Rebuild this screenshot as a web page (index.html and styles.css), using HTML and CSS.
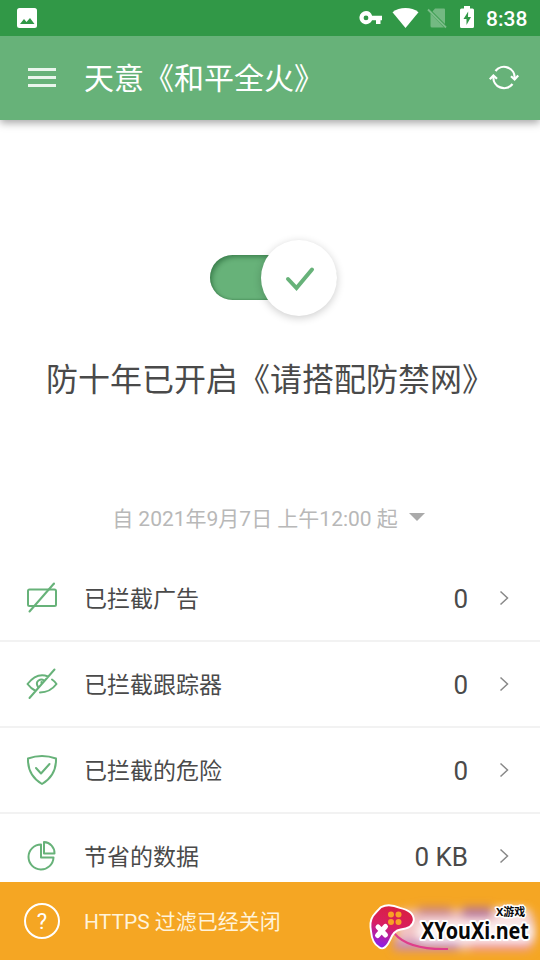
FILE: index.html
```html
<!DOCTYPE html>
<html lang="zh-CN">
<head>
<meta charset="utf-8">
<title>天意《和平全火》</title>
<link rel="stylesheet" href="styles.css">
</head>
<body>
<div class="screen">
  <div class="status-bar">
    <svg class="photo" width="20" height="20" viewBox="0 0 20 20"><rect width="20" height="20" rx="2.5" fill="#fff"/><path d="M3 16l4-5 2.500 3L13 10l4.500 6z" fill="#319847"/></svg>
    <div class="status-icons">
      <svg class="key" width="24" height="14" viewBox="0 0 24 14"><path fill="#fff" fill-rule="evenodd" d="M7 0a6.600 6.600 0 1 0 6.100 9.200H17V13h4.500V9.200H23V4.800H13.100A6.600 6.600 0 0 0 7 0zM7 4.500a2.400 2.400 0 1 1 0 4.800 2.400 2.400 0 0 1 0-4.800z"/></svg>
      <svg class="wifi" width="27" height="22" viewBox="0 0 27 22"><path fill="#fff" d="M0.500 5.200Q6 1 13.500 1T26.500 5.200L13.500 21z"/></svg>
      <svg class="sim" width="20" height="22" viewBox="0 0 20 22"><path fill="#fff" opacity=".32" d="M8 1.500h9q1 0 1 1V17L5.500 4.500zM3.500 6.500L17 20.500H5q-1.500 0-1.500-1.500z"/><path d="M1 2.500l18 18" stroke="#fff" stroke-width="1.800" opacity=".36"/></svg>
      <svg class="battery" width="14" height="22" viewBox="0 0 14 22"><path fill="#fff" d="M4 0h6v2.500h2.500Q14 2.500 14 4v16.500q0 1.500-1.500 1.500h-11Q0 22 0 20.500V4q0-1.500 1.500-1.500H4z"/><path fill="#319847" d="M8.200 5.500L3.500 13h3v6L11 11H8z"/></svg>
      <span class="clock">8:38</span>
    </div>
  </div>
  <header class="app-bar">
    <div class="menu"><i></i><i></i><i></i></div>
    <h1>天意《和平全火》</h1>
    <svg class="refresh" width="30" height="26" viewBox="0 0 30 26" fill="none" stroke="#fff" stroke-width="2.200"><path d="M6.500 6A10.700 10.700 0 0 1 25.600 13.500M23.500 19A10.700 10.700 0 0 1 4.400 11.500"/><path d="M22 11.200l3.600 3.300 3.600-3.900M.8 14.300l3.600-3.800L8 13.700"/></svg>
  </header>
  <main class="content">
    <div class="toggle">
      <div class="knob"><svg width="32" height="28" viewBox="0 0 32 28"><path d="M4 14l8.500 9L28 4.500" fill="none" stroke="#67b279" stroke-width="4" stroke-linecap="round"/></svg></div>
    </div>
    <h2>防十年已开启《请搭配防禁网》</h2>
    <div class="period"><span>自 2021年9月7日 上午12:00 起</span><svg width="16" height="8" viewBox="0 0 16 8"><path d="M0 0h16L8 8z" fill="#aaa"/></svg></div>
    <div class="stats">
      <div class="row">
        <svg class="icon" viewBox="0 0 32 32"><rect x="2" y="7.500" width="28" height="16.500" rx="1.500"/><path d="M3.500 29.500L28 1.500"/></svg>
        <span class="label">已拦截广告</span><span class="value">0</span>
        <svg class="chevron" viewBox="0 0 10 16"><path d="M1.500 1.500L8.500 8l-7 6.500"/></svg>
      </div>
      <div class="row">
        <svg class="icon" viewBox="0 0 32 32"><path d="M22 8.500Q11 4 1.500 16 5 20.500 9 22.500M26 11.500q2.500 1.700 4.500 4.500-6.500 8.500-16.500 8.500M12 19Q9.500 14.500 12.500 12.500 15.500 10.500 18 12.500M15.500 15.500v-1.500M3.500 30L28.500 1.500"/></svg>
        <span class="label">已拦截跟踪器</span><span class="value">0</span>
        <svg class="chevron" viewBox="0 0 10 16"><path d="M1.500 1.500L8.500 8l-7 6.500"/></svg>
      </div>
      <div class="row">
        <svg class="icon" viewBox="0 0 32 32"><path d="M2 4.500Q16-.5 30 4.500q.5 17-14 25.500Q1.500 21.500 2 4.500zM10 14l5 5.500 8.500-9.500"/></svg>
        <span class="label">已拦截的危险</span><span class="value">0</span>
        <svg class="chevron" viewBox="0 0 10 16"><path d="M1.500 1.500L8.500 8l-7 6.500"/></svg>
      </div>
      <div class="row">
        <svg class="icon" viewBox="0 0 32 32"><path d="M15 4.500A12.500 12.500 0 1 0 27.500 17.500H15zM18 2v11.500H28.500A11 11 0 0 0 18 2z"/></svg>
        <span class="label">节省的数据</span><span class="value">0 KB</span>
        <svg class="chevron" viewBox="0 0 10 16"><path d="M1.500 1.500L8.500 8l-7 6.500"/></svg>
      </div>
    </div>
  </main>
  <footer class="notice">
    <span class="help">?</span>
    <span class="notice-text">HTTPS 过滤已经关闭</span>
    <div class="watermark">
      <svg width="180" height="78" viewBox="0 0 180 78">
        <defs>
          <linearGradient id="pad" x1="0.600" y1="0" x2="0.300" y2="1"><stop offset="0" stop-color="#d82040"/><stop offset=".5" stop-color="#d91e62"/><stop offset="1" stop-color="#8c20e8"/></linearGradient>
          <filter id="soft" x="-30%" y="-60%" width="160%" height="220%"><feGaussianBlur stdDeviation="5"/></filter>
          <filter id="glow" x="-20%" y="-50%" width="140%" height="200%"><feGaussianBlur stdDeviation="4"/></filter>
        </defs>
        <g filter="url(#soft)">
          <rect x="36" y="28" width="138" height="40" rx="10" fill="#f2c4c4"/>
          <rect x="58" y="25" width="34" height="9" fill="#b8708a" opacity=".7"/>
          <rect x="102" y="25" width="30" height="11" fill="#a868a0" opacity=".8"/>
          <rect x="34" y="58" width="65" height="10" fill="#c58ac0"/>
          <rect x="110" y="60" width="60" height="8" fill="#f09ca8"/>
        </g>
        <rect x="57" y="40" width="116" height="20" rx="8" fill="#fff" opacity=".8" filter="url(#glow)"/>
        <rect x="134" y="25" width="34" height="14" rx="6" fill="#fff" opacity=".6" filter="url(#glow)"/>
        <path d="M34 51Q48 68 88 67" fill="none" stroke="#df3e8b" stroke-width="2"/>
        <g transform="translate(-7 .5) scale(.95 .94)">
          <path d="M30 27Q38 23 49 28 63 31 63 40 62 48 50 49 42 50 38 61 33 72 28 68 21 64 20 52 18 42 22 36 26 31 30 27z" fill="#fff" stroke="#fff" stroke-width="4" stroke-linejoin="round"/>
          <path d="M30 27Q38 23 49 28 63 31 63 40 62 48 50 49 42 50 38 61 33 72 28 68 21 64 20 52 18 42 22 36 26 31 30 27z" fill="url(#pad)"/>
        </g>
        <g fill="#f9a126"><circle cx="31" cy="32.500" r="3"/><circle cx="38.500" cy="32.500" r="3"/><circle cx="31" cy="40" r="3"/><circle cx="38.500" cy="40" r="3"/></g>
        <path d="M18 45l7.500 8M25.500 44.500l-8 9" stroke="#fff" stroke-width="5" stroke-linecap="round"/>
        <text class="brand-small" x="136" y="34">X游戏</text>
        <text class="brand" transform="translate(61 57) scale(.825 1)">XYouXi.net</text>
      </svg>
    </div>
  </footer>
</div>
</body>
</html>
```

FILE: styles.css
```css
* { box-sizing: border-box; }
body { margin: 0; font-family: Roboto, "Noto Sans CJK SC", sans-serif; color: #4a4a4a; background: #fff; }
h1, h2 { margin: 0; font-weight: 400; }
.screen { width: 540px; height: 960px; display: flex; flex-direction: column; overflow: hidden; }
.status-bar { height: 36px; flex: none; background: #319847; display: flex; align-items: center; justify-content: space-between; padding: 0 13px 0 17px; }
.status-icons { display: flex; align-items: center; }
.key { margin-right: 9px; }
.wifi { margin-right: 8px; }
.sim { margin-right: 13px; }
.battery { margin: -3px 12px 0 0; }
.clock { font-size: 21px; line-height: 36px; font-weight: 500; color: #fff; padding-top: 2px; width: 41px; white-space: nowrap; }
.app-bar { height: 84px; flex: none; background: #67b279; display: flex; align-items: center; padding: 0 21px 0 28px; box-shadow: 0 3px 8px rgba(0, 0, 0, .35); position: relative; clip-path: inset(0 0 -14px 0); z-index: 1; }
.menu { width: 28px; display: grid; gap: 5px; margin-right: 28px; margin-top: -1px; }
.menu i { height: 3px; background: #e9f5ec; }
.app-bar h1 { flex: 1; font-size: 30px; line-height: 40px; color: #fff; padding-top: 2px; }
.content { flex: 1; min-height: 0; overflow: hidden; display: flex; flex-direction: column; }
.toggle { flex: none; width: 127px; height: 45px; margin: 135px 0 0 210px; display: flex; align-items: center; justify-content: flex-end; border-radius: 23px; background: linear-gradient(#67b279, #67b279) left / 90px 45px no-repeat; box-shadow: inset 3px 3px 5px -1px rgba(0, 60, 20, .42), inset 0 -1px 2px rgba(0, 60, 20, .2); }
.knob { width: 76px; height: 76px; flex: none; border-radius: 50%; background: #fff; box-shadow: 0 2px 9px rgba(0, 0, 0, .2); display: flex; align-items: center; justify-content: center; padding: 2px 0 0 2px; }
.content h2 { flex: none; text-align: center; font-size: 32px; line-height: 48px; margin-top: 56px; }
.period { flex: none; display: flex; align-items: center; justify-content: center; gap: 11px; height: 32px; margin-top: 97px; padding-right: 3px; font-size: 21px; color: #b8b8b8; white-space: nowrap; }
.stats { flex: none; margin-top: 23px; }
.row { height: 86px; border-bottom: 2px solid #f2f2f2; display: flex; align-items: center; padding: 0 31px 0 26px; }
.icon { width: 32px; height: 32px; margin-right: 26px; fill: none; stroke: #67b279; stroke-width: 2; stroke-linecap: round; stroke-linejoin: round; }
.label { flex: 1; font-size: 23px; padding-bottom: 2px; }
.value { font-size: 26px; margin-right: 31px; padding-top: 2px; }
.chevron { width: 10px; height: 16px; fill: none; stroke: #888; stroke-width: 1.500; }
.notice { height: 78px; flex: none; background: #f5a623; color: #fff; display: flex; align-items: center; padding-left: 24px; position: relative; }
.help { width: 36px; height: 36px; border: 2px solid #fff; border-radius: 50%; display: flex; align-items: center; justify-content: center; font-size: 22px; margin-right: 24px; }
.notice-text { font-size: 21px; color: #fff3da; padding-bottom: 2px; }
.watermark { position: absolute; right: 0; top: 0; width: 180px; height: 78px; }
.watermark svg { display: block; }
.brand, .brand-small { fill: #080808; stroke: #fff; stroke-width: 4px; stroke-linejoin: round; paint-order: stroke; font-family: "Noto Sans", "Noto Sans CJK SC", sans-serif; font-weight: 700; }
.brand { font-size: 24px; }
.brand-small { font-size: 11px; stroke-width: 3px; }
```
